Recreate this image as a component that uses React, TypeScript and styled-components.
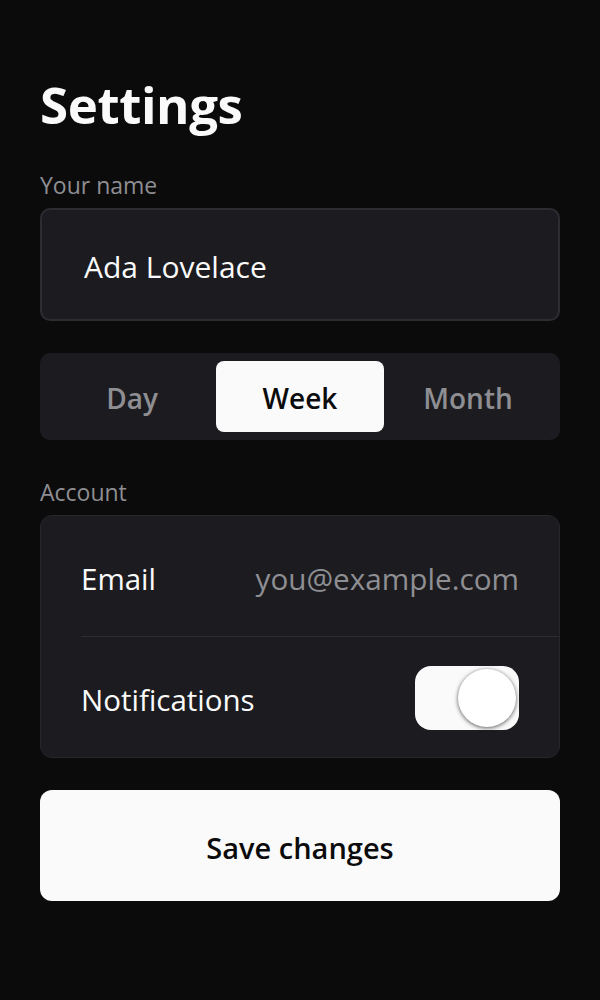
import React, { useState } from "react";
import styled, { createGlobalStyle, css } from "styled-components";

const GlobalStyle = createGlobalStyle`
  html, body {
    margin: 0;
    padding: 0;
    background: #0b0b0c;
  }
  body {
    font-family: "Open Sans", "Noto Sans", sans-serif;
    color: #fafafa;
  }
`;

const Page = styled.main`
  display: flex;
  flex-direction: column;
  padding: 74px 40px 60px;
  min-height: 1000px;
  box-sizing: border-box;
  background: #0b0b0c;
`;

const Title = styled.h1`
  margin: 0 0 37px;
  font-size: 51px;
  line-height: 60px;
  font-weight: 700;
  letter-spacing: -0.4px;
  color: #fafafa;
`;

const Label = styled.div<{ top?: number }>`
  margin-top: ${({ top }) => top ?? 0}px;
  margin-bottom: 9px;
  font-size: 23px;
  line-height: 28px;
  color: #8e8e93;
`;

const NameInput = styled.input`
  box-sizing: border-box;
  width: 100%;
  height: 113px;
  padding: 4px 42px 0;
  border: 2px solid #2c2c31;
  border-radius: 10px;
  background: #1c1c20;
  color: #fafafa;
  font-family: inherit;
  font-size: 30px;
  outline: none;
`;

const Segmented = styled.div`
  display: grid;
  grid-template-columns: repeat(3, 1fr);
  margin-top: 32px;
  height: 87px;
  padding: 8px;
  box-sizing: border-box;
  border-radius: 10px;
  background: #1c1c20;
`;

const Segment = styled.button<{ active?: boolean }>`
  padding: 3px 0 0;
  border: none;
  border-radius: 8px;
  background: transparent;
  font-family: inherit;
  font-size: 28px;
  font-weight: 600;
  color: #8e8e93;
  cursor: pointer;
  ${({ active }) =>
    active &&
    css`
      background: #fafafa;
      color: #0b0b0c;
    `}
`;

const Card = styled.section`
  border: 1px solid #26262b;
  border-radius: 12px;
  background: #1c1c20;
  overflow: hidden;
`;

const Row = styled.div<{ divider?: boolean }>`
  display: flex;
  align-items: center;
  justify-content: space-between;
  height: 120px;
  margin-left: 40px;
  padding-right: 40px;
  ${({ divider }) =>
    divider &&
    css`
      border-bottom: 1px solid #2c2c31;
    `}
`;

const RowLabel = styled.span`
  padding-top: 4px;
  font-size: 29.5px;
  color: #fafafa;
`;

const RowValue = styled.span`
  padding-top: 4px;
  font-size: 29.7px;
  color: #8e8e93;
`;

const Toggle = styled.button<{ on: boolean }>`
  position: relative;
  width: 104px;
  height: 64px;
  margin-top: 2px;
  padding: 0;
  border: none;
  border-radius: 16px;
  background: ${({ on }) => (on ? "#fafafa" : "#3a3a3f")};
  cursor: pointer;
`;

const Knob = styled.span<{ on: boolean }>`
  position: absolute;
  top: 3px;
  left: ${({ on }) => (on ? "43px" : "3px")};
  width: 58px;
  height: 58px;
  border-radius: 50%;
  background: #ffffff;
  box-shadow: 0 1px 4px rgba(0, 0, 0, 0.65);
`;

const SaveButton = styled.button`
  margin-top: 32px;
  height: 111px;
  padding: 3px 0 0;
  border: none;
  border-radius: 12px;
  background: #fafafa;
  color: #0b0b0c;
  font-family: inherit;
  font-size: 29px;
  font-weight: 600;
  cursor: pointer;
`;

const ranges = ["Day", "Week", "Month"];

export default function App() {
  const [range, setRange] = useState("Week");
  const [notify, setNotify] = useState(true);

  return (
    <>
      <GlobalStyle />
      <Page>
        <Title>Settings</Title>

        <Label>Your name</Label>
        <NameInput defaultValue="Ada Lovelace" />

        <Segmented>
          {ranges.map((r) => (
            <Segment key={r} active={r === range} onClick={() => setRange(r)}>
              {r}
            </Segment>
          ))}
        </Segmented>

        <Label top={38}>Account</Label>
        <Card>
          <Row divider>
            <RowLabel>Email</RowLabel>
            <RowValue>you@example.com</RowValue>
          </Row>
          <Row>
            <RowLabel>Notifications</RowLabel>
            <Toggle on={notify} onClick={() => setNotify(!notify)}>
              <Knob on={notify} />
            </Toggle>
          </Row>
        </Card>

        <SaveButton>Save changes</SaveButton>
      </Page>
    </>
  );
}
